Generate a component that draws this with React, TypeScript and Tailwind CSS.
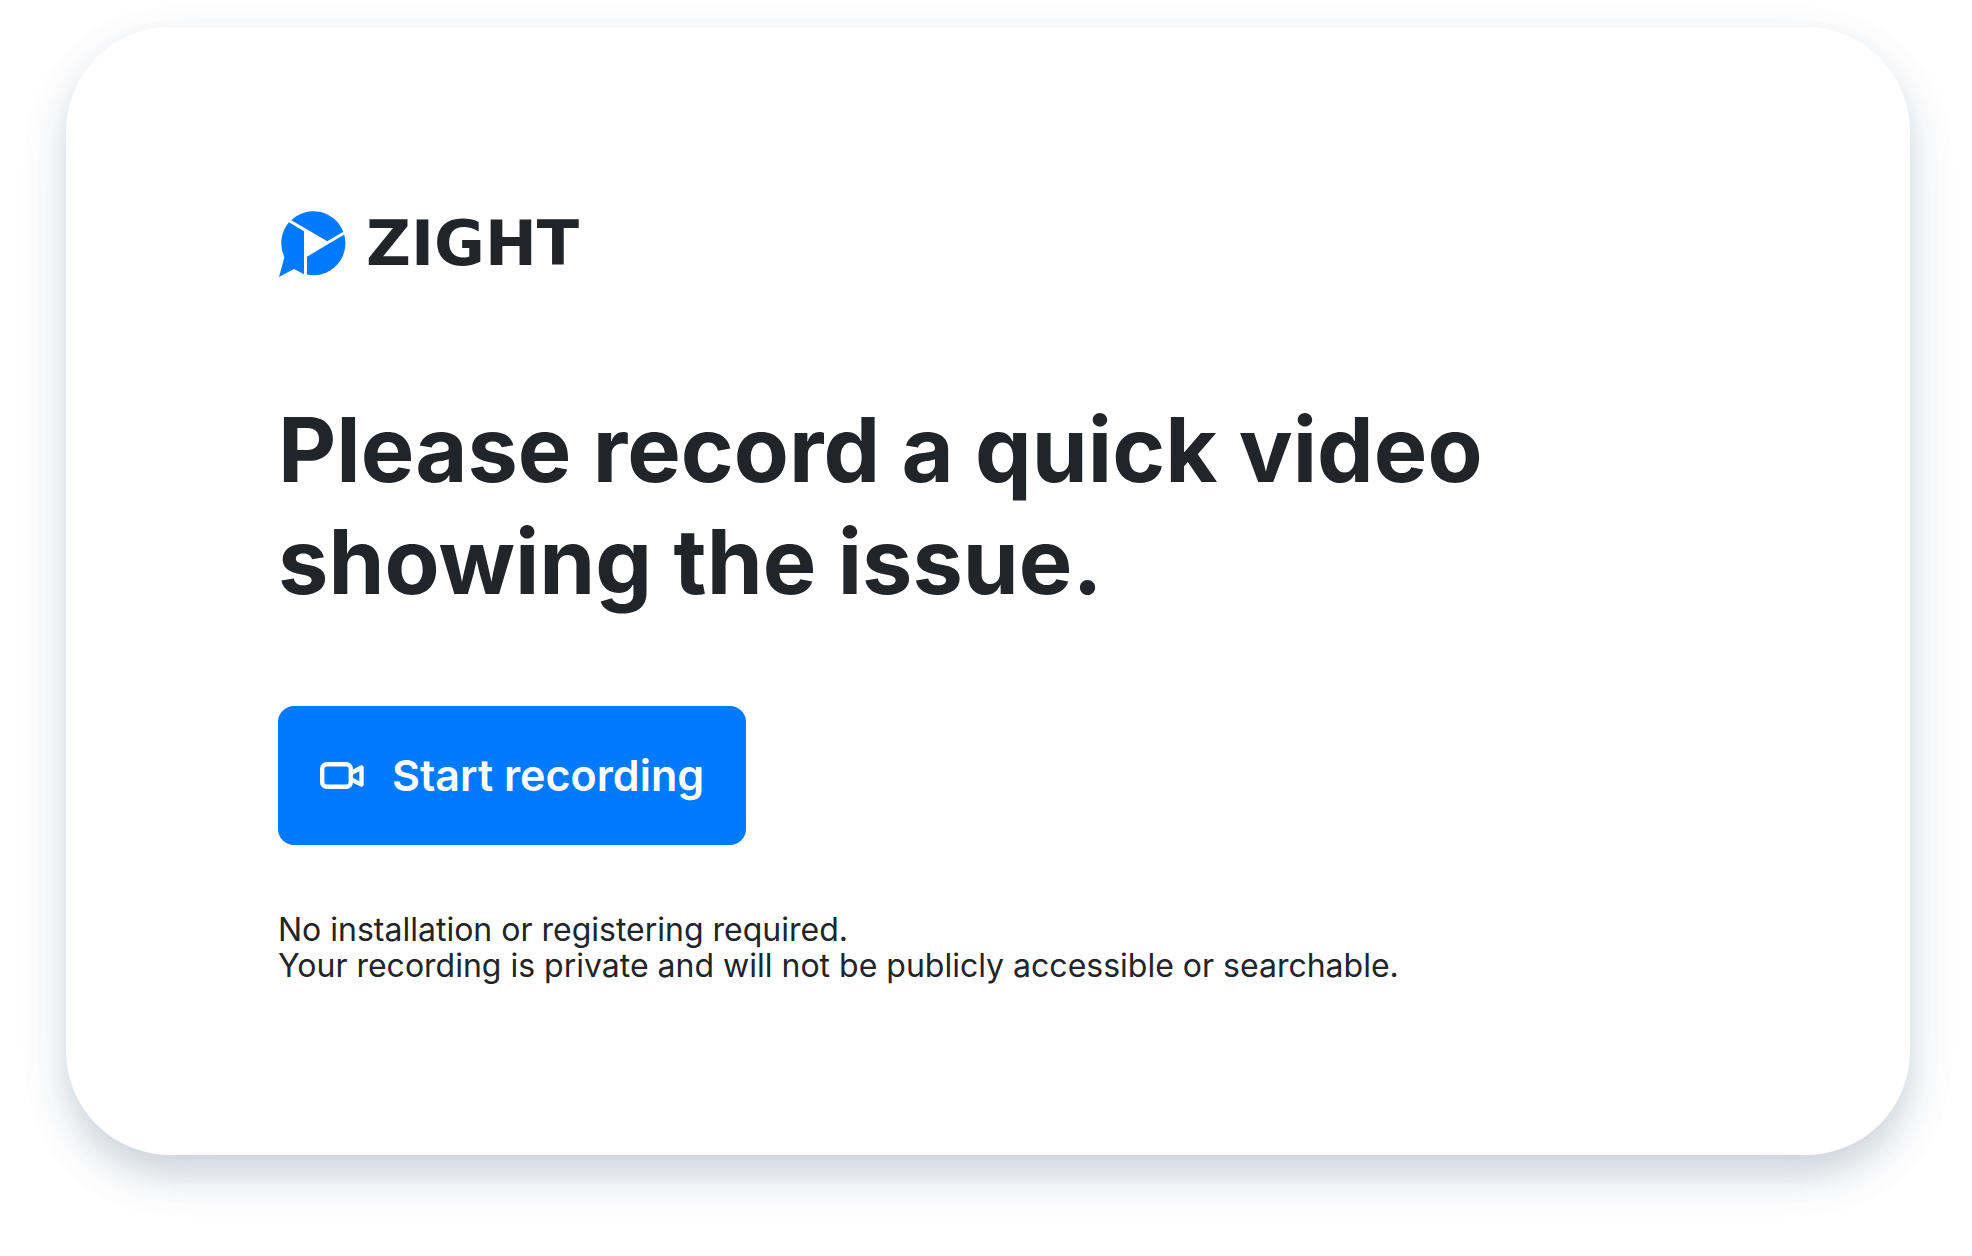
function ZightMark() {
  return (
    <svg viewBox="0 0 68 68" className="h-[68px] w-[68px] shrink-0" fill="#007aff" aria-hidden="true">
      {/* top segment */}
      <path d="M13.3 10.2A32 32 0 0 1 65.3 21.8L49.3 31.2Z" />
      {/* left segment with the bubble tail */}
      <path d="M11 12.3L26 21.2V64.2L16 59L1 67L6.4 47A32 32 0 0 1 11 12.3Z" />
      {/* right segment */}
      <path d="M29 46.7L66.2 24.6A32 32 0 0 1 29 64.6Z" />
    </svg>
  )
}

function CameraIcon() {
  return (
    <svg
      viewBox="0 0 44 30"
      className="h-[30px] w-11 shrink-0"
      fill="none"
      stroke="currentColor"
      strokeWidth="4.4"
      strokeLinejoin="round"
      aria-hidden="true"
    >
      <rect x="2.2" y="3.2" width="28.6" height="22.6" rx="4.5" />
      <path d="M31 12L41.5 6.5V23.5L31 18.5" />
    </svg>
  )
}

export default function App() {
  return (
    <main className="flow-root bg-white font-['Inter',sans-serif] text-[#212429]">
      <section className="mt-[27px] mr-[62px] mb-[99px] ml-[66px] rounded-[104px] bg-white px-[212px] pt-[183px] pb-[171px] shadow-[0_20px_40px_-2px_rgba(60,90,130,0.26),0_20px_70px_rgba(60,90,130,0.04)]">
        <div className="flex items-center gap-5">
          <ZightMark />
          <span className="font-['DejaVu_Sans',sans-serif] text-[62px] leading-[68px] font-bold">ZIGHT</span>
        </div>

        <h1 className="mt-[116px] text-[90px] leading-[112px] font-bold">
          Please record a quick video
          <br />
          showing the issue.
        </h1>

        <button
          type="button"
          className="mt-[88px] flex h-[139px] cursor-pointer items-center gap-7 rounded-2xl bg-[#007aff] px-[42px] text-[43px] font-semibold text-white"
        >
          <CameraIcon />
          Start recording
        </button>

        <p className="mt-[67px] text-[32px] leading-[36px]">
          No installation or registering required.
          <br />
          Your recording is private and will not be publicly accessible or searchable.
        </p>
      </section>
    </main>
  )
}
